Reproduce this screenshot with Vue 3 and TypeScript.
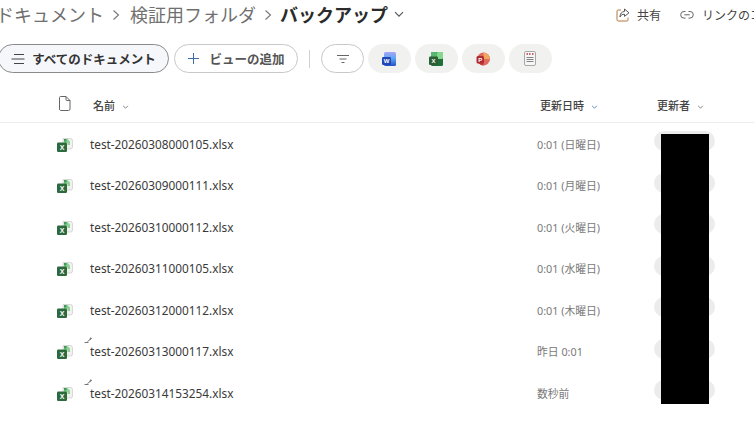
<script setup lang="ts">
interface Row { name: string; date: string; spinner: boolean }
const rows: Row[] = [
  { name: 'test-20260308000105.xlsx', date: '0:01 (日曜日)', spinner: false },
  { name: 'test-20260309000111.xlsx', date: '0:01 (月曜日)', spinner: false },
  { name: 'test-20260310000112.xlsx', date: '0:01 (火曜日)', spinner: false },
  { name: 'test-20260311000105.xlsx', date: '0:01 (水曜日)', spinner: false },
  { name: 'test-20260312000112.xlsx', date: '0:01 (木曜日)', spinner: false },
  { name: 'test-20260313000117.xlsx', date: '昨日 0:01', spinner: true },
  { name: 'test-20260314153254.xlsx', date: '数秒前', spinner: true },
]
</script>

<template>
  <div class="page">
    <header class="top">
      <nav class="crumbs">
        <span class="crumb">ドキュメント</span>
        <svg class="sep" width="10" height="12" viewBox="0 0 10 12"><path d="M2.500 1.500 7.500 6l-5 4.500" fill="none" stroke="#777" stroke-width="1.100"/></svg>
        <span class="crumb">検証用フォルダ</span>
        <svg class="sep" width="10" height="12" viewBox="0 0 10 12"><path d="M2.500 1.500 7.500 6l-5 4.500" fill="none" stroke="#777" stroke-width="1.100"/></svg>
        <strong class="current">バックアップ</strong>
        <svg class="cur-chev" width="10" height="7" viewBox="0 0 10 7"><path d="M1 1.200 5 5.200l4-4" fill="none" stroke="#555" stroke-width="1.100"/></svg>
      </nav>
      <div class="actions">
        <span class="action share">
          <svg width="14" height="14" viewBox="0 0 14 14" fill="none">
            <path d="M5 2H2.200A1.200 1.200 0 0 0 1 3.200v8.600A1.200 1.200 0 0 0 2.200 13h8.600a1.200 1.200 0 0 0 1.200-1.200V9.500" stroke="#b5763a" stroke-width="1"/>
            <path d="M8.500 1 13 4.800 8.500 8.400V6.200C6.300 6.200 4.800 7.200 4 9c0-3.200 1.700-5.400 4.500-5.600Z" stroke="#555" stroke-width="1" stroke-linejoin="round"/>
          </svg>
          共有
        </span>
        <span class="action link">
          <svg width="14" height="10" viewBox="0 0 14 10" fill="none" stroke="#666" stroke-width="1">
            <path d="M5.500 1.500H4a3.300 3.300 0 0 0 0 6.600h1.500M8.500 1.500H10a3.300 3.300 0 0 1 0 6.600H8.500M4.300 4.800h5.400"/>
          </svg>
          リンクのコピー
        </span>
      </div>
    </header>

    <div class="toolbar">
      <button class="pill active">
        <svg width="14" height="12" viewBox="0 0 14 12" stroke="#444" stroke-width="1"><path d="M3 1.500h10M0.500 6h13M3 10.500h10"/></svg>
        すべてのドキュメント
      </button>
      <button class="pill add">
        <svg width="13" height="13" viewBox="0 0 13 13" stroke="#3b6ea5" stroke-width="1"><path d="M6.500 1v11M1 6.500h11"/></svg>
        ビューの追加
      </button>
      <span class="divider"></span>
      <button class="pill filter">
        <svg width="14" height="10" viewBox="0 0 14 10" stroke="#666" stroke-width="1"><path d="M1 1.500h12M3.500 5h7M5.500 8.500h3"/></svg>
      </button>
      <button class="chip">
        <svg width="16" height="16" viewBox="0 0 16 16">
          <defs>
            <linearGradient id="wg" x1="0" y1="0" x2="0" y2="1">
              <stop offset="0" stop-color="#a9a6f5"/>
              <stop offset=".45" stop-color="#5fa8f3"/>
              <stop offset="1" stop-color="#2550c8"/>
            </linearGradient>
          </defs>
          <rect x="3" y="1" width="12" height="14" rx="1.500" fill="url(#wg)"/>
          <rect x="1" y="6" width="9" height="8" rx="1.200" fill="#1f47b5"/>
          <text x="5.500" y="12.300" class="ico-t">W</text>
        </svg>
      </button>
      <button class="chip">
        <svg width="16" height="16" viewBox="0 0 16 16">
          <rect x="3" y="1" width="12" height="14" rx="1.500" fill="#1f6e3e"/>
          <rect x="9" y="1" width="6" height="7" rx="1" fill="#86d68e"/>
          <rect x="3" y="1" width="6" height="5" rx="1" fill="#58b872"/>
          <rect x="1" y="5.500" width="9" height="8.500" rx="1.200" fill="#2e5e33"/>
          <text x="5.500" y="12.300" class="ico-t">X</text>
        </svg>
      </button>
      <button class="chip">
        <svg width="16" height="16" viewBox="0 0 16 16">
          <circle cx="8.500" cy="8" r="6.500" fill="#dd6b5e"/>
          <path d="M8.500 1.500A6.500 6.500 0 0 1 15 8H8.500Z" fill="#f0a860"/>
          <path d="M8.500 14.500A6.500 6.500 0 0 1 2 8h6.500Z" fill="#c43e3e"/>
          <rect x="1.500" y="5" width="7.500" height="7.500" rx="1.500" fill="#b02a30"/>
          <text x="5.200" y="11" class="ico-t">P</text>
        </svg>
      </button>
      <button class="chip">
        <svg width="12" height="15" viewBox="0 0 12 15">
          <rect x="0.500" y="0.500" width="11" height="14" rx="1.500" fill="#f6f6f6" stroke="#a8a8a8"/>
          <path d="M2.500 3h1.500M5 3h1.500M8 3h1.500" stroke="#c8303a" stroke-width="1.500"/>
          <path d="M2.500 6.500h7M2.500 8.500h7M2.500 10.500h7" stroke="#777" stroke-width="0.900"/>
        </svg>
      </button>
    </div>

    <div class="grid head">
      <span class="c-icon">
        <svg width="12" height="15" viewBox="0 0 12 15" fill="none" stroke="#666" stroke-width="1"><path d="M1.500.5H7l4 4v8.500a1.500 1.500 0 0 1-1.500 1.500h-8A1.500 1.500 0 0 1 .5 13V1.500a1 1 0 0 1 1-1ZM7 .5v3a1 1 0 0 0 1 1h3"/></svg>
      </span>
      <span class="h-name">名前<svg class="hchev" width="7" height="4" viewBox="0 0 8 5"><path d="M1 1l3 3 3-3" fill="none" stroke="#666"/></svg></span>
      <span class="h-date">更新日時<svg class="hchev" width="7" height="4" viewBox="0 0 8 5"><path d="M1 1l3 3 3-3" fill="none" stroke="#3b6ea5"/></svg></span>
      <span class="h-user">更新者<svg class="hchev" width="7" height="4" viewBox="0 0 8 5"><path d="M1 1l3 3 3-3" fill="none" stroke="#666"/></svg></span>
    </div>

    <div class="list">
      <span class="redact" aria-hidden="true"></span>
      <div v-for="r in rows" :key="r.name" class="grid row">
        <span class="c-icon">
          <svg width="16" height="14" viewBox="0 0 16 14">
            <path d="M6 .5h7.500a2 2 0 0 1 2 2v6.500a2 2 0 0 1-2 2H6Z" fill="#f1f1ef" stroke="#cfcfcf" stroke-width=".8"/>
            <path d="M7 1h3.500L13 3.500V7h-2.500V5H7Z" fill="#8fd094"/>
            <path d="M7 1h2.500v2.500H7Z" fill="#3f9a5b"/>
            <rect x="0" y="4.500" width="10" height="9.500" rx="1.200" fill="#2c6a3e"/>
            <text x="5" y="12" class="x-t">X</text>
          </svg>
        </span>
        <span class="name">
          <svg v-if="r.spinner" class="spin" width="9" height="7" viewBox="0 0 9 7" stroke="#666" stroke-width=".9" fill="none"><path d="M.5 5.500h4M3.500 4.500 8 1M6.500 .5 6 3"/></svg>
          {{ r.name }}
        </span>
        <span class="date">{{ r.date }}</span>
        <span class="user"></span>
      </div>
    </div>
  </div>
</template>

<style>
html, body { margin: 0; background: #fff; overflow: hidden; }
</style>

<style scoped>
.page {
  width: 754px;
  height: 447px;
  overflow: hidden;
  position: relative;
  font-family: "Noto Sans", "Noto Sans CJK JP", sans-serif;
  color: #323130;
}
.top {
  height: 44px;
  display: flex;
  align-items: flex-start;
  justify-content: space-between;
  white-space: nowrap;
}
.crumbs {
  display: flex;
  align-items: center;
  margin-left: -4px;
  height: 29px;
  font-size: 18px;
  line-height: 29px;
  font-family: "Noto Sans CJK JP", sans-serif;
}
.crumb { color: #707070; }
.sep { margin: 0 9px 0 7px; }
.current { font-weight: 700; color: #2b2b2b; margin-left: -2px; }
.cur-chev { margin-left: 6px; }
.actions {
  display: flex;
  gap: 19px;
  height: 29px;
  align-items: center;
  margin-right: -32px;
  font-size: 12px;
  font-family: "Noto Sans CJK JP", sans-serif;
  color: #444;
}
.action { display: inline-flex; align-items: center; gap: 8px; }
.share { gap: 7px; }
.toolbar {
  height: 29px;
  display: flex;
  align-items: center;
  margin-left: -2px;
  font-family: "Noto Sans CJK JP", sans-serif;
  font-size: 12.500px;
  font-weight: 700;
}
button { font: inherit; color: inherit; padding: 0; margin: 0; cursor: pointer; }
.pill {
  height: 29px;
  box-sizing: border-box;
  border: 1px solid #c8c8c8;
  border-radius: 15px;
  background: #fff;
  display: flex;
  align-items: center;
  justify-content: center;
  white-space: nowrap;
}
.active {
  width: 171px;
  gap: 7px;
  background: #f5f7fa;
  border-color: #8a8a8a;
  color: #333;
}
.add {
  width: 124px;
  gap: 9px;
  margin-left: 5px;
  color: #555;
}
.divider {
  width: 1px;
  height: 18px;
  background: #d0d0d0;
  margin: 0 11px;
}
.filter { width: 43px; }
.chip {
  width: 43.200px;
  height: 29px;
  border: 0;
  border-radius: 15px;
  background: #f1f1f0;
  margin-left: 3.800px;
  display: flex;
  align-items: center;
  justify-content: center;
}
.ico-t { font: 700 6px "Liberation Sans", sans-serif; fill: #fff; text-anchor: middle; }
.x-t { font: 700 7px "Liberation Sans", sans-serif; fill: #fff; text-anchor: middle; }
.grid {
  display: grid;
  grid-template-columns: 90px 447px 117px 1fr;
  align-items: center;
}
.c-icon { padding-left: 57px; display: flex; }
.head {
  height: 50px;
  padding-top: 14px;
  box-sizing: border-box;
  border-bottom: 1px solid #ededed;
  font-family: "Noto Sans CJK JP", sans-serif;
  font-size: 11px;
  font-weight: 500;
  color: #444;
}
.head .c-icon { padding-left: 59px; margin-top: -2px; }
.h-name, .h-date, .h-user { margin-left: 3px; }
.hchev { margin-left: 7px; vertical-align: 1px; }
.list { position: relative; }
.row { height: 41.500px; }
.row .c-icon { margin-top: 2px; }
.name {
  position: relative;
  font-size: 11.800px;
  color: #3a3a3a;
  white-space: nowrap;
}
.spin { position: absolute; left: -6px; top: -6px; }
.date {
  font-size: 10.800px;
  color: #7a7a7a;
  white-space: nowrap;
}
.user {
  width: 61px;
  height: 20px;
  border-radius: 10px;
  background: #ececec;
  margin-top: -5px;
}
.redact {
  position: absolute;
  left: 661px;
  top: 11px;
  width: 48px;
  height: 270px;
  background: #000;
  z-index: 2;
}
</style>
